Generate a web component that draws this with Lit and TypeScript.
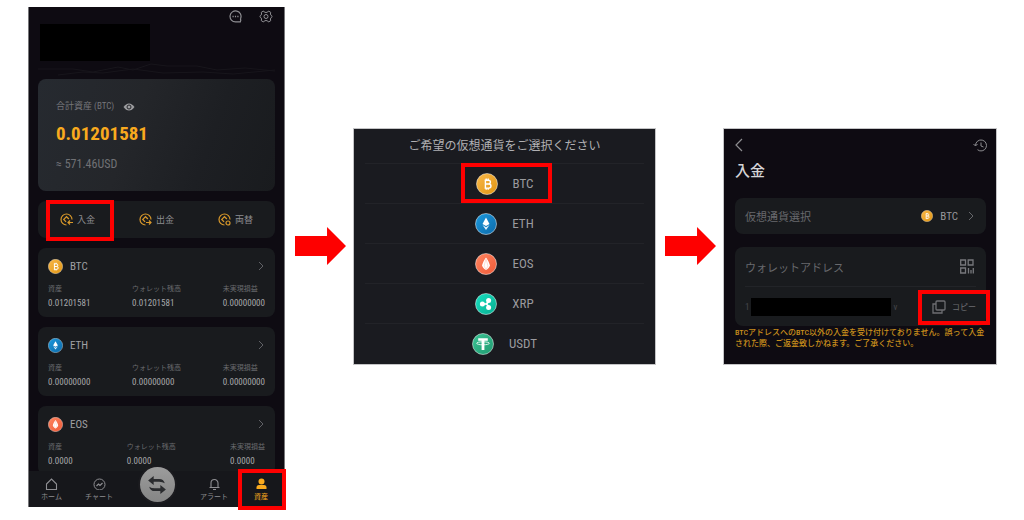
import { LitElement, html, css, svg } from "lit";
import { customElement } from "lit/decorators.js";

const tokens = css`
  :host {
    font-family: "Roboto Condensed", Roboto, "Noto Sans CJK JP", sans-serif;
    --bg: #0e0b12;
    --card: #191b1e;
    --text: #8e8e92;
    --gold: #f9aa1e;
    --mark: #fe0000;
  }
  * { box-sizing: border-box; }
  button, a, h2, p, dl, dt, dd, ul { margin: 0; padding: 0; }
  button { background: none; border: 0; font: inherit; color: inherit; cursor: pointer; }
  a { color: inherit; text-decoration: none; }
  ul { list-style: none; }
  svg { display: block; flex: none; }
  .marked { position: relative; }
  .marked::after {
    content: "";
    position: absolute;
    inset: 0;
    border: 4px solid var(--mark);
    pointer-events: none;
  }
`;

const coinArt: Record<string, { from: string; to: string; art: unknown }> = {
  BTC: {
    from: "#f9b84a", to: "#e09512",
    art: svg`<path d="M8.6 7.2h3.9a1.9 1.9 0 0 1 0 3.8H9.3m0 0h3.6a2 2 0 0 1 0 4.1H8.6M9.4 7.2v7.9M10.2 5.6v1.6M12.2 5.6v1.6M10.2 15.1v1.6M12.2 15.1v1.6" fill="none" stroke="#fff" stroke-width="1.4"/>`,
  },
  ETH: {
    from: "#1c9ade", to: "#0d69a8",
    art: svg`<path d="M11 4.6l3.5 6.3L11 13 7.5 10.9z" fill="#fff"/><path d="M7.5 12.1L11 14.2l3.5-2.1L11 17z" fill="#e4f2fb"/>`,
  },
  EOS: {
    from: "#ff8560", to: "#ee5a38",
    art: svg`<path d="M11 4.4c1.7 2.2 3.3 5 4 8.2-.8 2-2.2 3.6-4 4.4-1.8-.8-3.2-2.4-4-4.4.7-3.2 2.3-6 4-8.2z" fill="#fff"/><path d="M11 6l-2 7 2 3.6 2-3.6z" fill="none" stroke="#ffc4b2" stroke-width=".6"/>`,
  },
  XRP: {
    from: "#18e0c0", to: "#08ad90",
    art: svg`<g fill="#fff"><circle cx="7.4" cy="11" r="2.5"/><circle cx="13.6" cy="7.4" r="2.5"/><circle cx="13.6" cy="14.6" r="2.5"/></g><path d="M7.4 11h3.6M13.6 7.4Q13 11 10.5 11q2.5 0 3.1 3.6" fill="none" stroke="#fff" stroke-width="1.5"/>`,
  },
  USDT: {
    from: "#3cc495", to: "#1f9a70",
    art: svg`<path d="M6.2 5.2h9.6v2.5h-3.4V17H9.6V7.7H6.2z" fill="#fff"/><ellipse cx="11" cy="10.3" rx="6.4" ry="1.5" fill="none" stroke="#fff" stroke-width=".8"/>`,
  },
};

const coin = (name: string, size: number) => {
  const c = coinArt[name];
  return html`<svg width=${size} height=${size} viewBox="0 0 22 22" aria-hidden="true">
    <defs><linearGradient id="fill-${name}" x1="0" y1="0" x2="1" y2="1">
      <stop offset="0" stop-color=${c.from} /><stop offset="1" stop-color=${c.to} />
    </linearGradient></defs>
    <circle cx="11" cy="11" r="10.5" fill="url(#fill-${name})" stroke="#fff" stroke-opacity=".5" />
    ${c.art}
  </svg>`;
};

const icon = (w: number, h: number, art: unknown) => html`
  <svg width=${w} height=${h} viewBox="0 0 ${w} ${h}" fill="none" stroke="currentColor" stroke-width="1" aria-hidden="true">${art}</svg>`;

const chevron = icon(6, 10, svg`<path d="M1 1l4 4-4 4"/>`);

const art = {
  chat: svg`<path d="M11.3 11.9H6.500a5.500 5.500 0 1 1 5.200-3.600q-.4 1 .1 1.800z" stroke-width="1.2"/><path d="M3.5 6.5h1.200M5.9 6.5h1.200M8.3 6.5h1.200" stroke-width="1.3"/>`,
  gear: svg`<path d="M4.500 1q.5 1.500 2.500 1.500T9.500 1l2.200 1.300q-.7 2 .3 3l1.300 1.200-1.300 1.200q-1 1-.3 3L9.500 12Q9 10.500 7 10.500T4.500 12l-2.200-1.300q.7-2-.3-3L.7 6.500 2 5.300q1-1 .3-3z"/><circle cx="7" cy="6.5" r="2"/>`,
  eye: svg`<path d="M.5 4Q3 .5 6 .5T11.500 4Q9 7.500 6 7.500T.5 4z" fill="currentColor" stroke="none"/><circle cx="6" cy="4" r="2" stroke="#232529"/>`,
  home: svg`<path d="M1.500 6L6.500 1l5 5v5.500h-10z" stroke-width="1.1"/>`,
  chart: svg`<circle cx="6.5" cy="6.5" r="5.500"/><path d="M3.500 8l2-2 1.500 1.500L9.500 5" stroke-width="1.2"/>`,
  bell: svg`<path d="M.5 9.500h10M2 9.500V5a3.500 3.500 0 0 1 7 0v4.500M4 11.500h3" stroke-width="1.1"/>`,
  person: svg`<g fill="currentColor" stroke="none"><circle cx="5.5" cy="3.500" r="3"/><path d="M.5 11V9.500q0-2.500 2.500-2.500h5q2.500 0 2.500 2.500V11z"/></g>`,
};

@customElement("account-phone")
class AccountPhone extends LitElement {
  static styles = [tokens, css`
    :host { display: block; }
    .screen {
      height: 500px; display: flex; flex-direction: column;
      background: var(--bg); color: var(--text); border: solid #77777a; border-width: 0 1px;
    }
    .tools { display: flex; justify-content: flex-end; gap: 17px; padding: 3px 11px 1px 0; height: 17px; }
    .body { flex: 1; min-height: 0; overflow: hidden; padding: 0 9px; display: flex; flex-direction: column; gap: 10px; }
    .head { display: flex; flex-direction: column; flex: none; margin-bottom: -10px; }
    .redacted { width: 110px; height: 37px; background: #000; margin-left: 2px; }
    .waves { width: 100%; height: 18px; }
    .total {
      flex: none; height: 112px; padding: 21px 18px; border-radius: 8px;
      background: linear-gradient(110deg, #262a30 0, #24262a 40%, #1d1f23 70%, #191b1e 100%);
      display: flex; flex-direction: column;
    }
    .label { display: flex; align-items: center; gap: 9px; font-size: 9px; line-height: 13px; color: #75767a; }
    .label svg { color: #9c9c9f; }
    .amount { font-size: 19px; line-height: 26px; margin-top: 8px; font-weight: 700; color: var(--gold); }
    .usd { font-size: 12px; line-height: 16px; margin-top: 9px; color: #707175; }
    .actions { flex: none; height: 37px; background: var(--card); border-radius: 8px; display: grid; grid-template-columns: repeat(3, 1fr); }
    .action { display: flex; align-items: center; justify-content: center; gap: 4px; font-size: 9px; }
    .action svg { color: #d8982a; }
    .action.marked::after { inset: -1px 3px -3px 8px; }
    .coin { flex: none; height: 69px; background: var(--card); border-radius: 8px; padding: 9px 10px; }
    .name { display: flex; align-items: center; width: 100%; gap: 7px; font-size: 11px; line-height: 17px; height: 18px; color: #a0a0a3; }
    .name svg:last-child { margin-left: auto; color: #606166; margin-right: 1px; }
    .figures { display: flex; justify-content: space-between; margin-top: 8px; }
    dt { font-size: 7px; line-height: 12px; color: #6a6b6f; }
    dd { font-size: 9px; line-height: 16px; color: #a8a8ab; }
    .nav { flex: none; height: 36px; background: #16171b; display: grid; grid-template-columns: 45fr 50fr 66fr 48fr 46fr; position: relative; }
    .tab { display: flex; flex-direction: column; align-items: center; justify-content: flex-end; gap: 2px; font-size: 7px; line-height: 10px; padding-bottom: 5px; height: 36px; }
    .tab.marked { color: var(--gold); }
    .tab.marked::after { inset: -2px -2px -3px 0; }
    .swap { width: 35px; height: 35px; margin: -4px auto 0; border-radius: 50%; background: linear-gradient(#9c9c9c, #858585); box-shadow: 0 0 0 2px #1b1b1f; display: grid; place-items: center; color: #2a2b2e; }
  `];

  coins = [
    { name: "BTC", values: ["0.01201581", "0.01201581", "0.00000000"] },
    { name: "ETH", values: ["0.00000000", "0.00000000", "0.00000000"] },
    { name: "EOS", values: ["0.0000", "0.0000", "0.0000"] },
  ];

  action(label: string, tail: unknown, marked = false) {
    return html`<button class="action ${marked ? "marked" : ""}">
      ${icon(13, 13, svg`<g stroke-width="1.2"><path d="M6.500 12A5.500 5.500 0 1 1 12 6.500"/><path d="M8.900 6L6.500 3.700 3.700 6.500l2.400 2.400"/>${tail}</g>`)}
      <span>${label}</span>
    </button>`;
  }

  tab(label: string, glyph: unknown, marked = false) {
    return html`<a href="#" class="tab ${marked ? "marked" : ""}">${glyph}<span>${label}</span></a>`;
  }

  render() {
    const labels = ["資産", "ウォレット残高", "未実現損益"];
    return html`<div class="screen">
      <div class="tools">
        <button aria-label="chat">${icon(13, 13, art.chat)}</button>
        <button aria-label="settings">${icon(14, 13, art.gear)}</button>
      </div>
      <div class="body">
        <div class="head">
          <div class="redacted"></div>
          <svg class="waves" viewBox="0 0 237 18" preserveAspectRatio="none" fill="none" stroke="#17151b">
            <path d="M0 8h35l20 3 25-5 15 3 18-6 16 2 30 0 20 4 28-2 30 3" />
            <path d="M20 14l25-3 20 1 30-4 30 4 40-1 30 2 42-4" />
          </svg>
        </div>
        <section class="total">
          <div class="label"><span>合計資産 (BTC)</span>${icon(12, 8, art.eye)}</div>
          <div class="amount">0.01201581</div>
          <div class="usd">≈ 571.46USD</div>
        </section>
        <div class="actions">
          ${this.action("入金", svg`<path d="M13 9.500H8m2-2l-2 2 2 2"/>`, true)}
          ${this.action("出金", svg`<path d="M7 9.500h5m-2-2l2 2-2 2"/>`)}
          ${this.action("両替", svg`<circle cx="10" cy="10" r="2"/>`)}
        </div>
        ${this.coins.map((c) => html`<section class="coin">
          <button class="name">${coin(c.name, 15)}<span>${c.name}</span>${chevron}</button>
          <dl class="figures">${labels.map((l, i) => html`<div><dt>${l}</dt><dd>${c.values[i]}</dd></div>`)}</dl>
        </section>`)}
      </div>
      <nav class="nav">
        ${this.tab("ホーム", icon(13, 12, art.home))}
        ${this.tab("チャート", icon(13, 12, art.chart))}
        <button class="swap" aria-label="swap">
          <svg width="20" height="20" viewBox="0 0 18 18" fill="currentColor"><path d="M1 5l5-4v2.500h5q4 0 5 4-2-1.500-5-1.500H6v3z"/><path d="M17 13l-5 4v-2.500H7q-4 0-5-4 2 1.500 5 1.500h5V9z"/></svg>
        </button>
        ${this.tab("アラート", icon(11, 12, art.bell))}
        ${this.tab("資産", icon(11, 12, art.person), true)}
      </nav>
    </div>`;
  }
}

@customElement("coin-picker")
class CoinPicker extends LitElement {
  static styles = [tokens, css`
    :host { display: block; }
    .panel { background: #1a1b20; color: #9a9a9e; padding: 0 11px 1px; box-shadow: 0 0 0 1px #c4c4c6; }
    h2 { font-size: 12px; font-weight: 400; line-height: 17px; padding: 9px 0 8px; text-align: center; white-space: nowrap; color: #b0b0b3; }
    li { border-top: 1px solid #222328; height: 40px; display: flex; justify-content: center; }
    .pick { display: flex; align-items: center; gap: 15px; padding: 0 15px; font-size: 13px; line-height: 18px; }
    .pick.marked::after { inset: -1px -4px 0 0; }
  `];
  render() {
    return html`<section class="panel">
      <h2>ご希望の仮想通貨をご選択ください</h2>
      <ul>${Object.keys(coinArt).map((n) => html`<li>
        <button class="pick ${n === "BTC" ? "marked" : ""}">${coin(n, 22)}<span>${n}</span></button></li>`)}
      </ul>
    </section>`;
  }
}

@customElement("deposit-panel")
class DepositPanel extends LitElement {
  static styles = [tokens, css`
    :host { display: block; }
    .panel { background: var(--bg); color: #68696d; padding: 9px 10px 15px 11px; box-shadow: 0 0 0 1px #c4c4c6; }
    .bar { display: flex; justify-content: space-between; height: 14px; color: #8d8d90; margin-right: -1px; }
    h2 { font-size: 15px; line-height: 24px; font-weight: 500; color: #d4d4d6; margin-top: 7px; }
    .card { background: var(--card); border-radius: 8px; padding: 0 10px; font-size: 11px; }
    .select { display: flex; align-items: center; width: 100%; height: 36px; margin-top: 15px; text-align: left; }
    .chosen { display: flex; align-items: center; gap: 7px; margin-left: auto; font-size: 11px; color: #98989c; }
    .chosen svg:last-child { margin: 0 2px 0 3px; color: #66676b; }
    .wallet { margin-top: 13px; }
    .top { display: flex; justify-content: space-between; align-items: center; height: 40px; border-bottom: 1px solid #222428; }
    .top button { color: #77787c; margin-right: 2px; }
    .bottom { display: flex; align-items: center; height: 39px; font-size: 9px; color: #45464a; }
    .address { flex: 1; max-width: 140px; height: 18px; background: #000; margin: 0 2px; }
    .copy { display: flex; align-items: center; gap: 6px; margin-left: auto; font-size: 8px; color: #6d6e72; height: 38px; }
    .copy.marked::after { inset: 2px -14px 1px -14px; }
    p { font-size: 8px; line-height: 11px; color: #c98f1c; font-weight: 500; margin: 1px -6px 0 0; }
  `];
  render() {
    return html`<section class="panel">
      <div class="bar">
        <button aria-label="back">${icon(8, 14, svg`<path d="M7 1L1 7l6 6" stroke-width="1.2"/>`)}</button>
        <button aria-label="history">${icon(14, 13, svg`<path d="M2.500 6.500a5.500 5.500 0 1 1 2 4.200M.5 5l2 2 2-2M8 3.500V7l2.500 1"/>`)}</button>
      </div>
      <h2>入金</h2>
      <button class="card select">
        <span>仮想通貨選択</span>
        <span class="chosen">${coin("BTC", 12)}<span>BTC</span>${chevron}</span>
      </button>
      <div class="card wallet">
        <div class="top"><span>ウォレットアドレス</span>
          <button aria-label="QR">${icon(14, 15, svg`<path d="M.7 1h4.800v5H.7zM8.200 1H13v5H8.200zM.7 9h4.800v5H.7zM8.500 9v5.500M11 11v3.500M13.300 9v5.500" stroke-width="1.3"/>`)}</button>
        </div>
        <div class="bottom">
          <span>1</span><div class="address"></div><span>v</span>
          <button class="copy marked">${icon(14, 14, svg`<rect x="4" y="1" width="9" height="9" rx="1" stroke-width="1.3"/><path d="M4 4H1v9h9v-3" stroke-width="1.3"/>`)}<span>コピー</span></button>
        </div>
      </div>
      <p>BTCアドレスへのBTC以外の入金を受け付けておりません。誤って入金された際、ご返金致しかねます。ご了承ください。</p>
    </section>`;
  }
}

@customElement("app-root")
class AppRoot extends LitElement {
  static styles = css`
    :host { display: block; background: #fff; }
    .flow { display: grid; grid-template-columns: 257fr 69fr 301fr 69fr 272fr; align-items: center; padding: 7px 28px 13px; }
    .step { min-width: 0; margin-bottom: 21px; }
    .arrow { display: block; width: 74%; margin: 0 0 21px 15%; }
  `;
  arrow() {
    return html`<svg class="arrow" viewBox="0 0 51 38" aria-hidden="true"><path d="M0 9h32V0l19 19-19 19V29H0z" fill="#fe0000" /></svg>`;
  }
  render() {
    return html`<main class="flow">
      <account-phone></account-phone>
      ${this.arrow()}
      <coin-picker class="step"></coin-picker>
      ${this.arrow()}
      <deposit-panel class="step"></deposit-panel>
    </main>`;
  }
}
